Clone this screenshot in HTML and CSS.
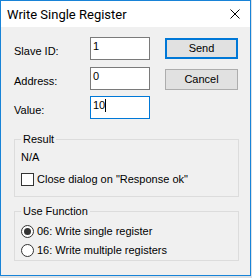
FILE: index.html
```html
<!DOCTYPE html>
<html>
    <head>
        <link rel="stylesheet" href="styles.css">
    </head>
    <body>
        <div class="dialog">
            <div class="titlebar">
                <span class="title">Write Single Register</span>
                <svg class="close" width="10" height="10" viewBox="0 0 10 10">
                    <path d="M0.5 0.5 L9.5 9.5 M9.5 0.5 L0.5 9.5" stroke="#000" stroke-width="1" fill="none"/>
                </svg>
            </div>
            <div class="content">
                <div class="top">
                    <div class="fields">
                        <div class="row">
                            <span class="label">Slave ID:</span>
                            <div class="field">1</div>
                        </div>
                        <div class="row">
                            <span class="label">Address:</span>
                            <div class="field">0</div>
                        </div>
                        <div class="row">
                            <span class="label">Value:</span>
                            <div class="field focused">10<span class="caret"></span></div>
                        </div>
                    </div>
                    <div class="buttons">
                        <div class="button default">Send</div>
                        <div class="button">Cancel</div>
                    </div>
                </div>

                <fieldset class="group result">
                    <legend>Result</legend>
                    <p class="status">N/A</p>
                    <div class="option">
                        <span class="checkbox"></span>
                        <span>Close dialog on "Response ok"</span>
                    </div>
                </fieldset>

                <fieldset class="group functions">
                    <legend>Use Function</legend>
                    <div class="option">
                        <span class="radio checked"></span>
                        <span>06: Write single register</span>
                    </div>
                    <div class="option">
                        <span class="radio"></span>
                        <span>16: Write multiple registers</span>
                    </div>
                </fieldset>
            </div>
        </div>
    </body>
</html>
```

FILE: styles.css
```css
body {
    margin: 0;
    background: #dfe1e3;
    font-family: 'Liberation Sans', Arial, sans-serif;
    font-size: 11px;
    line-height: 13px;
    color: #000;
}

.dialog {
    width: 249px;
    height: 274px;
    border: 1px solid #1883d7;
    background: #f0f0f0;
}

.titlebar {
    height: 26px;
    background: #fff;
    display: flex;
    align-items: center;
    padding-left: 6px;
    padding-right: 10px;
}

.title {
    font-family: Roboto, 'Noto Sans', sans-serif;
    font-size: 13px;
    flex: 1;
    padding-top: 1px;
}

.close {
    display: block;
}

.content {
    padding: 10px 11px 0 13px;
}

.top {
    display: flex;
}

.fields {
    display: flex;
    flex-direction: column;
    gap: 7px;
}

.row {
    display: flex;
    height: 23px;
}

.row:nth-child(3) {
    margin-top: -1px;
}

.label {
    width: 76px;
    padding-top: 8px;
}

.field {
    box-sizing: border-box;
    width: 60px;
    height: 23px;
    border: 1px solid #7a7a7a;
    background: #fff;
    padding: 2px 2px 0;
}

.field.focused {
    border-color: #0078d7;
}

.caret {
    display: inline-block;
    width: 1px;
    height: 13px;
    background: #000;
    vertical-align: top;
}

.buttons {
    margin-left: 15px;
    margin-top: 1px;
    display: flex;
    flex-direction: column;
    gap: 10px;
}

.button {
    box-sizing: border-box;
    width: 73px;
    height: 21px;
    border: 1px solid #adadad;
    background: #e1e1e1;
    display: flex;
    align-items: center;
    justify-content: center;
}

.button.default {
    border: 2px solid #0078d7;
}

.group {
    width: 225px;
    box-sizing: border-box;
    margin: 0;
    border: 1px solid #dcdcdc;
    padding: 0 6px;
}

.group legend {
    padding: 0 2px;
}

.result {
    margin-top: 14px;
    padding-top: 5px;
    padding-bottom: 10px;
}

.status {
    margin: 0 0 9px;
}

.functions {
    margin-top: 8px;
    padding-top: 7px;
    padding-bottom: 3px;
}

.functions .option + .option {
    margin-top: 6px;
}

.option {
    display: flex;
    align-items: center;
    gap: 3px;
    height: 13px;
}

.checkbox {
    box-sizing: border-box;
    width: 13px;
    height: 13px;
    border: 1px solid #333;
    background: #fff;
}

.radio {
    box-sizing: border-box;
    width: 13px;
    height: 13px;
    border: 1px solid #333;
    border-radius: 50%;
    background: #fff;
    display: flex;
    align-items: center;
    justify-content: center;
}

.radio.checked::after {
    content: "";
    width: 7px;
    height: 7px;
    border-radius: 50%;
    background: #333;
}
```
